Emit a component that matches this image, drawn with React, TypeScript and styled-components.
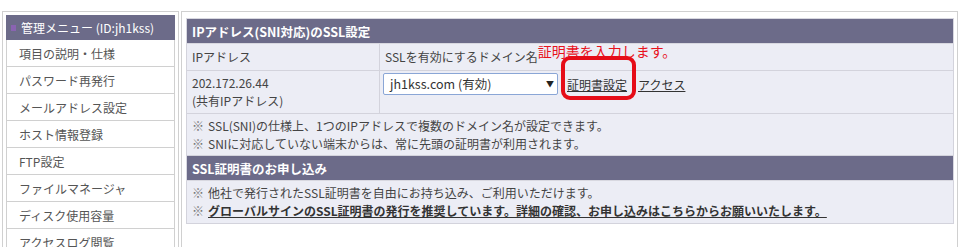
import styled, { createGlobalStyle } from "styled-components";

const GlobalStyle = createGlobalStyle`
  body {
    margin: 0;
    background: #ffffff;
    font-family: "Noto Sans CJK JP", "Noto Sans", sans-serif;
    color: #444;
  }
`;

const Page = styled.div`
  display: flex;
  align-items: flex-start;
  gap: 2px;
  padding: 11px 0 0 2px;
  width: 960px;
  height: 247px;
  box-sizing: border-box;
  overflow: hidden;
`;

const Sidebar = styled.div`
  width: 177px;
  box-sizing: border-box;
  border: 1px solid #d0d0d0;
  padding: 3px 3px 0 3px;
  height: 260px;
`;

const MenuHead = styled.div`
  display: flex;
  align-items: center;
  gap: 5px;
  height: 25px;
  padding-left: 5px;
  background: #6c6b89;
  color: #ffffff;
  font-size: 12px;
`;

const Bullet = styled.span`
  width: 5px;
  height: 6px;
  background: #8a63b2;
`;

const MenuItem = styled.div`
  height: 27px;
  box-sizing: border-box;
  border: 1px solid #d0d0d0;
  border-top: none;
  padding-left: 12px;
  display: flex;
  align-items: center;
  font-size: 12px;
  color: #555;
  background: #fff;
`;

const Main = styled.div`
  width: 777px;
  height: 260px;
  box-sizing: border-box;
  border: 1px solid #d0d0d0;
  padding: 6px 3px 0 4px;
`;

const Table = styled.table`
  width: 768px;
  border-collapse: collapse;
  font-size: 12px;
  color: #444;
`;

const HeadCell = styled.th`
  height: 24px;
  padding: 0 5px;
  background: #6c6b89;
  color: #ffffff;
  font-weight: bold;
  font-size: 12.5px;
  text-align: left;
  border: 1px solid #d8d8e0;
`;

const Cell = styled.td<{ $w?: number; $h: number; $top?: boolean }>`
  position: relative;
  width: ${(p) => (p.$w ? `${p.$w}px` : "auto")};
  height: ${(p) => p.$h}px;
  box-sizing: border-box;
  padding: ${(p) => (p.$top ? "2px 5px 0" : "0 5px")};
  background: #ecedf5;
  border: 1px solid #d3d3dc;
  vertical-align: ${(p) => (p.$top ? "top" : "middle")};
  line-height: 18px;
`;

const Note = styled.div<{ $strong?: boolean }>`
  line-height: 18px;
  font-weight: ${(p) => (p.$strong ? "bold" : "normal")};
`;

const Mark = styled.span`
  color: #777;
  margin-right: 4px;
`;

// annotation text, raised a little above the row's baseline without growing the row
const Red = styled.span`
  color: #e8121c;
  font-size: 14px;
  vertical-align: 5px;
  line-height: 0;
`;

const Controls = styled.div`
  display: flex;
  align-items: center;
  margin-left: -2px;
`;

const Select = styled.div`
  width: 175px;
  height: 22px;
  box-sizing: border-box;
  border: 1px solid #8aa6d6;
  border-radius: 2px;
  background: #fff;
  display: flex;
  align-items: center;
  justify-content: space-between;
  padding: 0 3px 0 6px;
  font-size: 12.5px;
  color: #333;
`;

const Arrow = styled.span`
  font-size: 8px;
  color: #222;
`;

const LinkText = styled.a<{ $gap: number }>`
  margin-left: ${(p) => p.$gap}px;
  line-height: 17px;
  color: #333;
  text-decoration: underline;
  font-size: 12px;
`;

/* red annotation frame drawn over the 証明書設定 link */
const Highlight = styled.span`
  position: absolute;
  left: 181px;
  top: -15px;
  width: 75px;
  height: 44px;
  box-sizing: border-box;
  border: 4px solid #e60d18;
  border-radius: 9px;
  pointer-events: none;
`;

const Underlined = styled.a`
  color: #333;
  text-decoration: underline;
`;

const menu = [
  "項目の説明・仕様",
  "パスワード再発行",
  "メールアドレス設定",
  "ホスト情報登録",
  "FTP設定",
  "ファイルマネージャ",
  "ディスク使用容量",
  "アクセスログ閲覧",
];

export default function App() {
  return (
    <>
      <GlobalStyle />
      <Page>
        <Sidebar>
          <MenuHead>
            <Bullet />
            管理メニュー (ID:jh1kss)
          </MenuHead>
          {menu.map((m) => (
            <MenuItem key={m}>{m}</MenuItem>
          ))}
        </Sidebar>
        <Main>
          <Table>
            <tbody>
              <tr>
                <HeadCell colSpan={2}>IPアドレス(SNI対応)のSSL設定</HeadCell>
              </tr>
              <tr>
                <Cell $w={193} $h={27}>IPアドレス</Cell>
                <Cell $h={27}>
                  SSLを有効にするドメイン名<Red>証明書を入力します。</Red>
                </Cell>
              </tr>
              <tr>
                <Cell $w={193} $h={43}>
                  202.172.26.44
                  <br />
                  (共有IPアドレス)
                </Cell>
                <Cell $h={43} $top>
                  <Controls>
                    <Select>
                      jh1kss.com (有効)
                      <Arrow>▼</Arrow>
                    </Select>
                    <LinkText href="#" $gap={9}>
                      証明書設定
                    </LinkText>
                    <LinkText href="#" $gap={11}>
                      アクセス
                    </LinkText>
                  </Controls>
                  <Highlight />
                </Cell>
              </tr>
              <tr>
                <Cell colSpan={2} $h={42}>
                  <Note>
                    <Mark>※</Mark>SSL(SNI)の仕様上、1つのIPアドレスで複数のドメイン名が設定できます。
                  </Note>
                  <Note>
                    <Mark>※</Mark>SNIに対応していない端末からは、常に先頭の証明書が利用されます。
                  </Note>
                </Cell>
              </tr>
              <tr>
                <HeadCell colSpan={2}>SSL証明書のお申し込み</HeadCell>
              </tr>
              <tr>
                <Cell colSpan={2} $h={43}>
                  <Note>
                    <Mark>※</Mark>他社で発行されたSSL証明書を自由にお持ち込み、ご利用いただけます。
                  </Note>
                  <Note $strong>
                    <Mark>※</Mark>
                    <Underlined href="#">
                      グローバルサインのSSL証明書の発行を推奨しています。詳細の確認、お申し込みはこちらからお願いいたします。
                    </Underlined>
                  </Note>
                </Cell>
              </tr>
            </tbody>
          </Table>
        </Main>
      </Page>
    </>
  );
}
